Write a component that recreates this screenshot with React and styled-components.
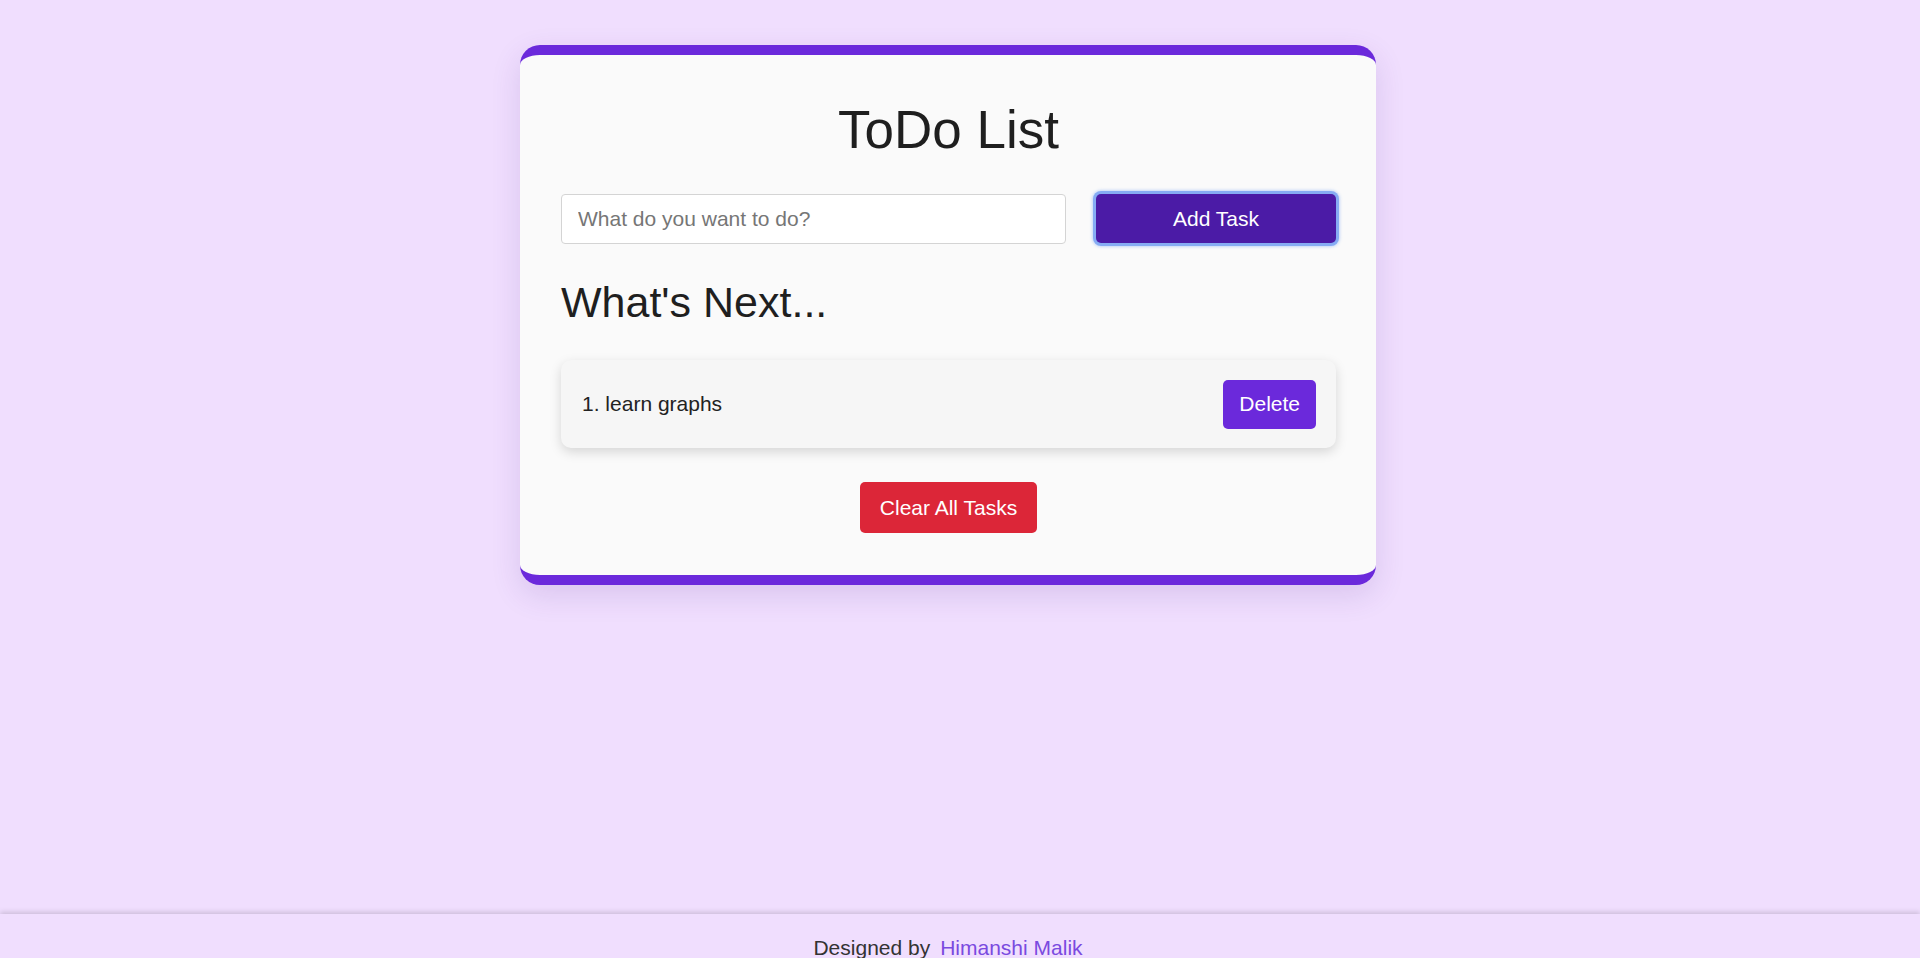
import React from 'react';
import styled, { createGlobalStyle } from 'styled-components';

const GlobalStyle = createGlobalStyle`
  * {
    box-sizing: border-box;
  }

  body {
    margin: 0;
    background-color: #f0defe;
    font-family: "Liberation Sans", Arial, sans-serif;
    color: #222;
  }
`;

const Main = styled.main`
  min-height: calc(100vh - 44px);
  padding: 45px 24px 0 0;
`;

const Card = styled.div`
  width: 856px;
  margin: 0 auto;
  padding: 45px 40px 42px 41px;
  background-color: #fafafa;
  border-top: 10px solid #6b29db;
  border-bottom: 10px solid #6b29db;
  border-radius: 20px;
  box-shadow: 0 10px 30px rgba(80, 40, 140, 0.14);
  display: flex;
  flex-direction: column;
`;

const Title = styled.h1`
  margin: 0;
  font-size: 53px;
  line-height: 60px;
  font-weight: 400;
  text-align: center;
  color: #1f1f1f;
`;

const InputRow = styled.div`
  display: flex;
  gap: 30px;
  margin-top: 34px;
`;

const TaskInput = styled.input`
  flex: 1;
  height: 50px;
  padding: 0 16px;
  border: 1px solid #d4d4d4;
  border-radius: 4px;
  background: #fff;
  font-family: inherit;
  font-size: 21px;
  color: #222;

  &::placeholder {
    color: #767676;
  }
`;

const Button = styled.button`
  height: ${(p) => p.$height || 49}px;
  padding: 0 ${(p) => p.$padX || 16}px;
  border: none;
  border-radius: 5px;
  background-color: ${(p) => p.$bg};
  color: #fff;
  font-family: inherit;
  font-size: 21px;
  cursor: pointer;
`;

const AddButton = styled(Button)`
  width: 240px;
  box-shadow: 0 0 0 3px #86acf4, 0 0 3px 4px rgba(134, 172, 244, 0.45);
`;

const Heading = styled.h2`
  margin: 34px 0 0;
  font-size: 43px;
  line-height: 49px;
  font-weight: 400;
  color: #1f1f1f;
`;

const TaskList = styled.ul`
  list-style: none;
  margin: 33px 0 0;
  padding: 0;
`;

const TaskItem = styled.li`
  display: flex;
  align-items: center;
  justify-content: space-between;
  height: 88px;
  padding: 0 20px 0 21px;
  background-color: #f6f6f6;
  border-radius: 10px;
  box-shadow: 0 4px 12px rgba(0, 0, 0, 0.15);
`;

const TaskText = styled.span`
  font-size: 21px;
  color: #222;
`;

const ClearRow = styled.div`
  display: flex;
  justify-content: center;
  margin-top: 34px;
`;

const Footer = styled.footer`
  padding: 22px 24px 22px 0;
  text-align: center;
  font-size: 21px;
  line-height: 24px;
  color: #333;
  box-shadow: 0 -2px 5px rgba(0, 0, 0, 0.15);
`;

const Link = styled.a`
  margin-left: 10px;
  color: #7a4ae0;
  text-decoration: none;
`;

const tasks = ['learn graphs'];

export default function App() {
  return (
    <>
      <GlobalStyle />
      <Main>
        <Card>
          <Title>ToDo List</Title>
          <InputRow>
            <TaskInput placeholder="What do you want to do?" />
            <AddButton $bg="#4b1ba6" $height={49}>Add Task</AddButton>
          </InputRow>
          <Heading>What's Next...</Heading>
          <TaskList>
            {tasks.map((task, i) => (
              <TaskItem key={task}>
                <TaskText>{i + 1}. {task}</TaskText>
                <Button $bg="#6b29db" $padX={16}>Delete</Button>
              </TaskItem>
            ))}
          </TaskList>
          <ClearRow>
            <Button $bg="#dc2638" $height={51} $padX={20}>Clear All Tasks</Button>
          </ClearRow>
        </Card>
      </Main>
      <Footer>
        Designed by<Link href="#">Himanshi Malik</Link>
      </Footer>
    </>
  );
}
